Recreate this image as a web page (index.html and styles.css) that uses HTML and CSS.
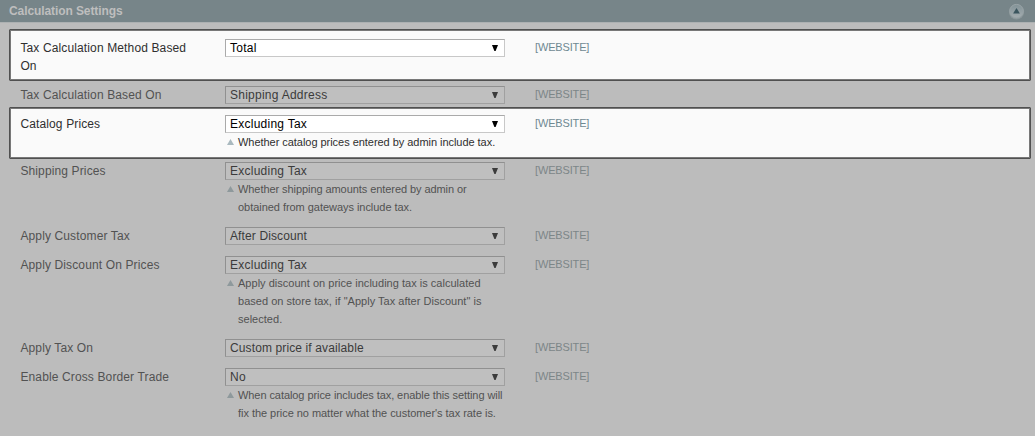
FILE: index.html
```
<!DOCTYPE html>
<html lang="en">
<head>
<meta charset="utf-8">
<title>Calculation Settings</title>
<link rel="stylesheet" href="styles.css">
</head>
<body>
<header class="section-head">
  <h1>Calculation Settings</h1>
  <svg class="toggle" width="18" height="18" viewBox="0 0 18 18">
    <defs><linearGradient id="g" x1="0" y1="0" x2="0" y2="1"><stop offset="0" stop-color="#829297"/><stop offset="1" stop-color="#a4adb0"/></linearGradient></defs>
    <circle cx="8.5" cy="9.8" r="7.6" fill="#8b979a"/>
    <circle cx="8.5" cy="9.2" r="6.8" fill="url(#g)" stroke="#98a3a6" stroke-width="1"/>
    <path d="M8.5 6l3.4 5.6H5.1z" fill="#3b555e"/>
  </svg>
</header>
<main class="settings">
  <div class="row row-method lit">
    <div class="label">Tax Calculation Method Based On</div>
    <div class="value"><div class="select"><span>Total</span><i class="arrow"></i></div></div>
    <div class="scope">[WEBSITE]</div>
  </div>
  <div class="row row-based">
    <div class="label">Tax Calculation Based On</div>
    <div class="value"><div class="select"><span>Shipping Address</span><i class="arrow"></i></div></div>
    <div class="scope">[WEBSITE]</div>
  </div>
  <div class="row row-catalog lit">
    <div class="label">Catalog Prices</div>
    <div class="value"><div class="select"><span>Excluding Tax</span><i class="arrow"></i></div>
      <div class="note"><i class="mark"></i><p>Whether catalog prices entered by admin include tax.</p></div></div>
    <div class="scope">[WEBSITE]</div>
  </div>
  <div class="row row-shipping">
    <div class="label">Shipping Prices</div>
    <div class="value"><div class="select"><span>Excluding Tax</span><i class="arrow"></i></div>
      <div class="note"><i class="mark"></i><p><span class="tight">Whether shipping amounts entered by admin or</span><br>obtained from gateways include tax.</p></div></div>
    <div class="scope">[WEBSITE]</div>
  </div>
  <div class="row">
    <div class="label">Apply Customer Tax</div>
    <div class="value"><div class="select"><span class="snug">After Discount</span><i class="arrow"></i></div></div>
    <div class="scope">[WEBSITE]</div>
  </div>
  <div class="row">
    <div class="label">Apply Discount On Prices</div>
    <div class="value"><div class="select"><span>Excluding Tax</span><i class="arrow"></i></div>
      <div class="note loose"><i class="mark"></i><p>Apply discount on price including tax is calculated<br>based on store tax, if "Apply Tax after Discount" is<br>selected.</p></div></div>
    <div class="scope">[WEBSITE]</div>
  </div>
  <div class="row">
    <div class="label">Apply Tax On</div>
    <div class="value"><div class="select"><span class="snug">Custom price if available</span><i class="arrow"></i></div></div>
    <div class="scope">[WEBSITE]</div>
  </div>
  <div class="row">
    <div class="label">Enable Cross Border Trade</div>
    <div class="value"><div class="select"><span>No</span><i class="arrow"></i></div>
      <div class="note"><i class="mark"></i><p><span class="tight">When catalog price includes tax, enable this setting will</span><br>fix the price no matter what the customer's tax rate is.</p></div></div>
    <div class="scope">[WEBSITE]</div>
  </div>
</main>
</body>
</html>
```
FILE: styles.css
```
* { box-sizing: border-box; }
body {
  margin: 0;
  height: 436px;
  overflow: hidden;
  background: #bcbcbc;
  color: #525252;
  font-family: "Liberation Sans", Arial, sans-serif;
  font-size: 12px;
  line-height: 18px;
}
.section-head {
  display: flex;
  justify-content: space-between;
  align-items: center;
  height: 23px;
  padding: 0 9px 1px;
  background: #778589;
  border-bottom: 1px solid #adb1b2;
}
.section-head h1 {
  margin: 0;
  color: #bebebe;
  font-size: 12px;
  line-height: 18px;
  letter-spacing: -0.09px;
}
.toggle { display: block; }
.settings { padding: 6px 4px 0 9px; }
.row {
  display: grid;
  grid-template-columns: 205px 310px 1fr;
  align-items: start;
  padding: 5px 0 6px 11px;
}
.row-method { height: 52px; }
.row-based { height: 26px; }
.row-catalog { height: 52px; }
.row-shipping { padding-top: 3px; }
.lit {
  padding: 9px 0 0 10px;
  background: #fafafa;
  border: 1px solid #505050;
  border-radius: 1px;
  box-shadow: inset 0 0 0 1px #787878;
  color: #2f2f2f;
}
.row-catalog { padding-top: 7px; }
.label {
  width: 180px;
  padding-left: 0.4px;
  letter-spacing: 0.13px;
}
.value { width: 280px; }
.select {
  display: flex;
  justify-content: space-between;
  align-items: center;
  height: 18px;
  padding: 0 6px 0 4px;
  border: 1px solid #a0a0a0;
  border-top-color: #909090;
  border-left-color: #909090;
  background: #bfbfbf;
  color: #3b3b3b;
  line-height: 16px;
  letter-spacing: 0.25px;
}
.snug { letter-spacing: 0.12px; }
.lit .select {
  background: #fff;
  border-color: #aaa #c8c8c8 #c8c8c8 #aaa;
  color: #000;
}
.arrow {
  width: 6px;
  height: 6px;
  background: currentColor;
  clip-path: polygon(0 0, 100% 0, 60% 100%, 40% 100%);
}
.note {
  display: flex;
  gap: 4px;
  padding-left: 2px;
  font-size: 11px;
  letter-spacing: -0.04px;
  white-space: nowrap;
}
.note p { margin: 0; }
.tight { letter-spacing: -0.07px; }
.loose { letter-spacing: 0.02px; }
.mark {
  flex: none;
  width: 7px;
  height: 6px;
  margin-top: 6px;
  background: #8e999c;
  clip-path: polygon(50% 0, 100% 100%, 0 100%);
}
.lit .mark { background: #a9b9bf; }
.scope {
  color: #7c8688;
  font-size: 11px;
  line-height: 17px;
  letter-spacing: -0.15px;
}
.lit .scope { color: #6f8992; }
```
